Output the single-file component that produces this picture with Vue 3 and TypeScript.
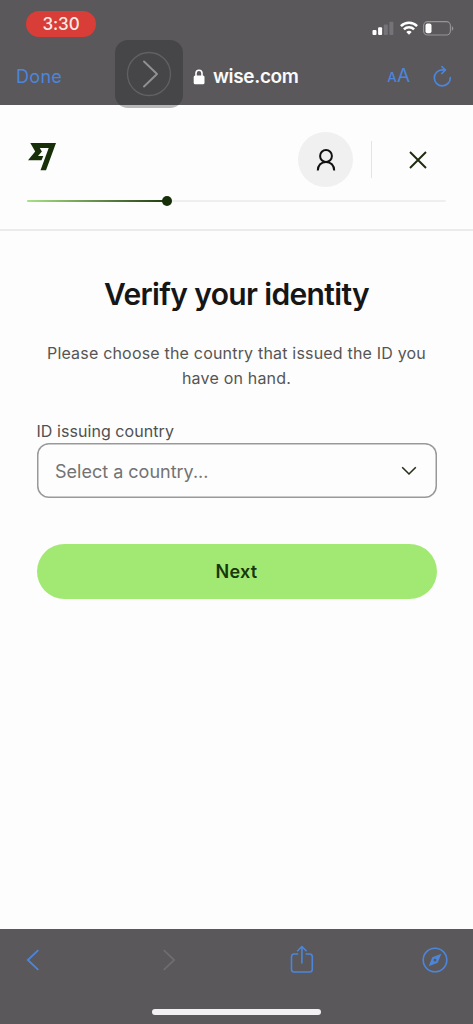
<script setup lang="ts">
import { ref } from 'vue'

const host = ref<string>('wise.com')
const time = ref<string>('3:30')
const progress = ref<number>(33.3)
const placeholder = ref<string>('Select a country...')
</script>

<template>
  <div class="screen">
    <header class="chrome">
      <div class="status">
        <span class="time">{{ time }}</span>
        <div class="indicators">
          <svg class="signal" width="22" height="14" viewBox="0 0 22 14">
            <rect x="0.5" y="9" width="4" height="5" rx="1" fill="#fff" />
            <rect x="6.1" y="6.3" width="4" height="7.7" rx="1" fill="#fff" />
            <rect x="11.8" y="3.5" width="4" height="10.5" rx="1" fill="#757377" />
            <rect x="17.4" y="0.8" width="4" height="13.2" rx="1" fill="#757377" />
          </svg>
          <svg class="wifi" width="18" height="14" viewBox="0 0 18 14" fill="none" stroke="#fff" stroke-width="2.5">
            <path d="M.9 5.1a11.6 11.6 0 0 1 16.2 0" />
            <path d="M3.9 8.3a7.3 7.3 0 0 1 10.2 0" />
            <path d="M9 13.7 6.3 11a3.9 3.9 0 0 1 5.4 0z" fill="#fff" stroke="none" />
          </svg>
          <svg class="battery" width="31" height="15" viewBox="0 0 31 15">
            <rect x=".6" y=".6" width="26.8" height="13.4" rx="4" fill="none" stroke="#969498" stroke-width="1.1" />
            <rect x="2.5" y="2.4" width="6" height="9.8" rx="2" fill="#fff" />
            <path d="M28.8 5v4.8q1.5-.7 1.5-2.4T28.8 5z" fill="#969498" />
          </svg>
        </div>
      </div>
      <div class="navbar">
        <span class="done">Done</span>
        <div class="address">
          <svg width="12" height="16" viewBox="0 0 12 16">
            <path d="M3 7V4.3a3 3 0 0 1 6 0V7" fill="none" stroke="#fff" stroke-width="1.6" />
            <rect x=".7" y="6.6" width="10.8" height="8.7" rx="1.5" fill="#fff" />
          </svg>
          <span class="host">{{ host }}</span>
        </div>
        <div class="tools">
          <span class="text-size"><small>A</small>A</span>
          <svg width="22" height="24" viewBox="0 0 22 24" fill="none" stroke="#4b86dc" stroke-width="1.7" stroke-linecap="round" stroke-linejoin="round">
            <path d="M19.3 12.7A8 8 0 1 1 11.3 4.9h2.7" />
            <path d="m10.9 1.7 3.5 3.3-3.5 3.5" />
          </svg>
        </div>
      </div>
      <div class="assist">
        <svg width="68" height="68" viewBox="0 0 68 68" fill="none">
          <circle cx="34" cy="34" r="21.5" stroke="#626064" stroke-width="1.3" />
          <path d="M29 21.5 42 34 29 46.5" stroke="#929094" stroke-width="1.9" stroke-linecap="round" stroke-linejoin="round" />
        </svg>
      </div>
    </header>

    <section class="brandbar">
      <div class="brandrow">
        <svg class="logo" width="29" height="28" viewBox="0 0 29 28">
          <path d="M2.3 0H28L18 27.2H12.5L20.7 4.9H11.8L13.9 8.5L10 12.9H15.3L13.5 17.2H0L7.2 8.6Z" fill="#173009" />
        </svg>
        <div class="actions">
          <div class="avatar">
            <svg width="20" height="24" viewBox="0 0 20 24" fill="none" stroke="#111" stroke-width="2">
              <circle cx="10" cy="8" r="5.9" />
              <path d="M1.8 22.5C1.8 17.3 5.2 13.9 10 13.9s8.200 3.400 8.200 8.600" />
            </svg>
          </div>
          <div class="divider"></div>
          <svg class="close" width="18" height="18" viewBox="0 0 18 18" fill="none" stroke="#1d2b0c" stroke-width="1.9">
            <path d="m1 1 16 16M17 1 1 17" />
          </svg>
        </div>
      </div>
      <div class="track">
        <div class="fill" :style="{ width: progress + '%' }"></div>
        <div class="dot"></div>
      </div>
    </section>

    <main class="content">
      <h1>Verify your identity</h1>
      <p><span class="line">Please choose the country that issued the ID you</span> <span class="line">have on hand.</span></p>
      <label>ID issuing country</label>
      <button class="select" type="button">
        <span>{{ placeholder }}</span>
        <svg width="16" height="10" viewBox="0 0 16 10" fill="none" stroke="#263018" stroke-width="1.6">
          <path d="m1.2 1.3 6.8 6.7 6.8-6.7" />
        </svg>
      </button>
      <button class="next" type="button"><span>Next</span></button>
    </main>

    <footer class="toolbar">
      <div class="icons">
        <svg width="14" height="22" viewBox="0 0 14 22" fill="none" stroke="#4b86dc" stroke-width="1.8"><path d="M12.3 1.2 1.8 11l10.5 9.8" /></svg>
        <svg class="forward" width="14" height="22" viewBox="0 0 14 22" fill="none" stroke="#6e6c70" stroke-width="1.8"><path d="m1.7 1.2 10.5 9.8-10.5 9.8" /></svg>
        <svg class="share" width="24" height="28" viewBox="0 0 24 28" fill="none" stroke="#4b86dc" stroke-width="1.6" stroke-linejoin="round">
          <path d="M8.2 9H4.2Q1.5 9 1.5 11.7V24.3Q1.5 27 4.2 27H19.6Q22.3 27 22.3 24.3V11.7Q22.3 9 19.6 9H15.6" />
          <path d="M11.9 18.6V1.5M7.2 6.2l4.7-4.7 4.7 4.7" />
        </svg>
        <svg width="26" height="26" viewBox="0 0 26 26" fill="none">
          <circle cx="13" cy="13" r="11.8" stroke="#4b86dc" stroke-width="1.6" />
          <path fill-rule="evenodd" d="m19.3 6.7-3.6 9-9 3.6 3.6-9zM13 11.5a1.5 1.5 0 1 0 0 3 1.5 1.5 0 0 0 0-3z" fill="#4b86dc" />
        </svg>
      </div>
      <div class="home"></div>
    </footer>
  </div>
</template>

<style>
body {
  margin: 0;
  background: #fdfdfd;
}
</style>

<style scoped>
.screen {
  display: flex;
  flex-direction: column;
  width: 473px;
  height: 1024px;
  overflow: hidden;
  background: #fdfdfd;
  font-family: Inter, "Liberation Sans", sans-serif;
}
.chrome {
  position: relative;
  flex: none;
  height: 105px;
  background: #5a585b;
}
.status {
  display: flex;
  justify-content: space-between;
  align-items: flex-start;
  height: 48px;
  padding: 11px 19px 0 26px;
  box-sizing: border-box;
}
.time {
  width: 70px;
  height: 26px;
  border-radius: 13px;
  background: #d93d37;
  color: #fbeae4;
  font-size: 17px;
  font-weight: 500;
  line-height: 26px;
  text-align: center;
  letter-spacing: -0.1px;
}
.indicators {
  display: flex;
  align-items: center;
  gap: 6px;
  padding-top: 9px;
}
.battery { margin: 1px 0 0 -1px; }
.navbar {
  display: flex;
  align-items: center;
  height: 57px;
  padding: 0 20px 0 16px;
}
.done {
  width: 177px;
  color: #4b86dc;
  font-size: 18px;
  letter-spacing: 0.3px;
}
.address {
  display: flex;
  align-items: center;
  gap: 8px;
  flex: 1;
}
.host {
  color: #fafafa;
  font-size: 19px;
  font-weight: 600;
  letter-spacing: -0.35px;
}
.tools {
  display: flex;
  align-items: center;
  gap: 21px;
}
.text-size {
  color: #4b86dc;
  font-size: 19px;
  line-height: 24px;
}
.text-size small {
  font-size: 13.5px;
  font-weight: 500;
}
.assist {
  position: absolute;
  left: 115px;
  top: 40px;
  width: 68px;
  height: 68px;
  border-radius: 13px;
  background: rgba(28, 26, 30, 0.3);
}
.assist svg { display: block; }
.brandbar {
  flex: none;
  height: 126px;
  box-sizing: border-box;
  padding: 27px 27px 0;
  border-bottom: 2px solid #ebebeb;
}
.brandrow {
  display: flex;
  justify-content: space-between;
  height: 55px;
}
.logo { margin: 11px 0 0 1px; }
.actions {
  display: flex;
  align-items: center;
  padding-right: 19px;
}
.avatar {
  display: flex;
  align-items: center;
  justify-content: center;
  width: 55px;
  height: 55px;
  border-radius: 50%;
  background: #f0f0f0;
}
.divider {
  width: 1px;
  height: 37px;
  margin: 0 37px 0 18px;
  background: #e4e4e4;
}
.track {
  display: flex;
  align-items: center;
  height: 2px;
  margin-top: 13px;
  border-radius: 1px;
  background: #efefef;
}
.fill {
  height: 2px;
  border-radius: 1px;
  background: linear-gradient(90deg, #a9e184, #203b10);
}
.dot {
  width: 10px;
  height: 10px;
  margin-left: -5px;
  border-radius: 50%;
  background: #173009;
}
.content {
  display: flex;
  flex-direction: column;
  flex: 1;
  padding: 43px 36.5px 0;
}
h1 {
  margin: 0;
  color: #161616;
  font-size: 30px;
  font-weight: 600;
  line-height: 40px;
  text-align: center;
  letter-spacing: -0.65px;
}
p {
  margin: 27px 0 0;
  color: #555;
  font-size: 16px;
  line-height: 25px;
  text-align: center;
}
.line {
  display: block;
  white-space: nowrap;
  letter-spacing: 0.19px;
}
label {
  margin-top: 29px;
  color: #505050;
  font-size: 16px;
  line-height: 22px;
  letter-spacing: 0.06px;
}
.select {
  display: flex;
  align-items: center;
  justify-content: space-between;
  height: 55px;
  margin-top: 1px;
  padding: 1px 19.5px 0 18.5px;
  box-sizing: border-box;
  border: 0;
  box-shadow: inset 0 0 0 1.5px #999;
  border-radius: 12px;
  background: transparent;
  color: #737373;
  font: 400 18px Inter, "Liberation Sans", sans-serif;
}
.next {
  height: 55px;
  margin-top: 46px;
  padding: 0;
  border: 0;
  border-radius: 28px;
  background: #a2e974;
  color: #17380a;
  font: 600 18px Inter, "Liberation Sans", sans-serif;
  letter-spacing: 0.3px;
}
.toolbar {
  display: flex;
  flex-direction: column;
  align-items: center;
  flex: none;
  height: 95px;
  background: #5a585b;
}
.icons {
  display: flex;
  align-items: center;
  align-self: stretch;
  height: 62px;
  padding-left: 26px;
}
.forward { margin-left: 122px; }
.share { margin: -2px 108px 0 113.5px; }
.home {
  width: 169px;
  height: 6px;
  margin-top: 18px;
  border-radius: 3px;
  background: #f2f0f2;
}
</style>
